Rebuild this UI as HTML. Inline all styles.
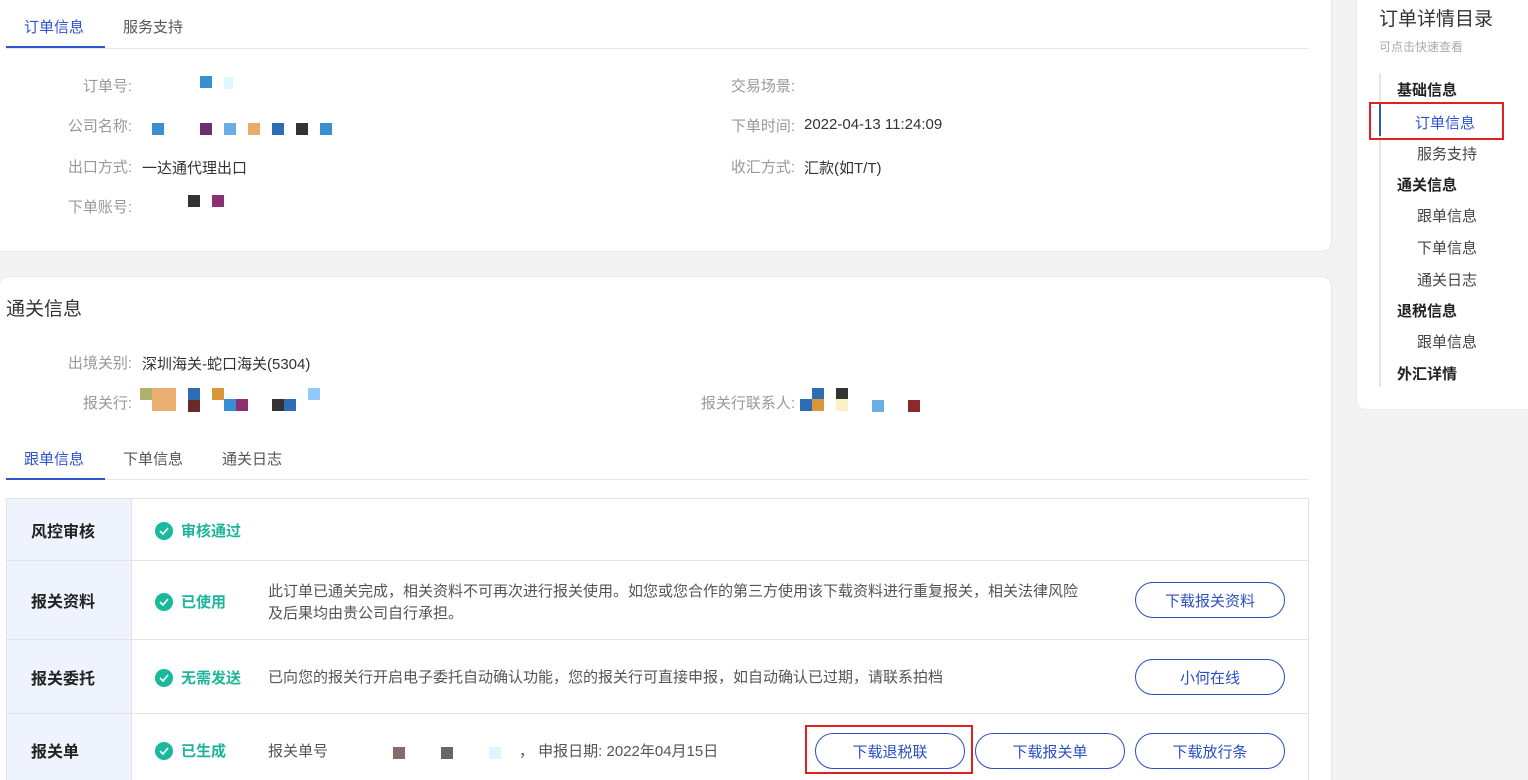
<!DOCTYPE html>
<html style="width:1528px;height:780px;overflow:hidden"><head><meta charset="utf-8"><style>
*{margin:0;padding:0;box-sizing:border-box}
body{width:1528px;height:780px;overflow:hidden;background:#f3f3f4;font-family:"Liberation Sans","Noto Sans CJK SC",sans-serif;font-size:15px;color:#333;position:relative}
.card{position:absolute;left:0;width:1332px;background:#fff;border-radius:0 0 10px 0;border:1px solid #e8e8e8;border-left:none}
.abs{position:absolute;white-space:nowrap}
.lab{color:#999;text-align:right;width:132px;left:0}
.lab2{color:#999;text-align:right;width:795px;left:0}
.tab{position:absolute;font-size:15px;color:#555}
.line{position:absolute;height:1px;background:#e4e6ea}
.ul{position:absolute;height:2px;background:#2b55cc}
.px{position:absolute;width:12px;height:12px}
.tbl{position:absolute;left:6px;top:498px;width:1303px;border:1px solid #e3e3e3;height:290px;overflow:hidden}
.row{position:absolute;left:0;width:1301px;border-top:1px solid #e3e3e3}
.hd{position:absolute;left:0;top:0;bottom:0;width:125px;background:#eff3fd;border-right:1px solid #e3e3e3;font-weight:bold;font-size:16px;color:#222;display:flex;align-items:center;padding-left:24px}
.st{position:absolute;left:148px;display:flex;align-items:center;color:#1bb69a;font-weight:bold;font-size:15px}
.ck{width:18px;height:18px;border-radius:50%;background:#19b99c;margin-right:8px;display:flex;align-items:center;justify-content:center}
.btn{position:absolute;width:150px;height:36px;border:1px solid #2b4fc0;border-radius:18px;color:#2b4fc0;font-size:15px;display:flex;align-items:center;justify-content:center;background:#fff}
.desc{position:absolute;left:261px;color:#555;font-size:15px;line-height:22px}
.side{position:absolute;left:1356px;top:-10px;width:180px;height:420px;background:#fff;border-radius:10px;border:1px solid #ebebeb}
.si{position:absolute;font-size:15px;color:#444;white-space:nowrap}
</style></head><body>

<div class="card" style="top:-10px;height:262px"></div>
<div class="tab" style="left:24px;top:16px;color:#2b55cc">订单信息</div>
<div class="tab" style="left:123px;top:16px">服务支持</div>
<div class="line" style="left:6px;top:48px;width:1302px"></div>
<div class="ul" style="left:6px;top:46px;width:99px"></div>

<div class="abs lab" style="top:75px">订单号:</div>
<div class="px" style="left:200px;top:76px;background:#3a8fd0"></div>
<div class="px" style="left:224px;top:77px;width:9px;background:#ddf8fc"></div>
<div class="abs lab" style="top:115px">公司名称:</div>
<div class="px" style="left:152px;top:123px;background:#3a8fd0"></div>
<div class="px" style="left:200px;top:123px;background:#6b2f70"></div>
<div class="px" style="left:224px;top:123px;background:#6aaee8"></div>
<div class="px" style="left:248px;top:123px;background:#e8ab6a"></div>
<div class="px" style="left:272px;top:123px;background:#2e6cb4"></div>
<div class="px" style="left:296px;top:123px;background:#333"></div>
<div class="px" style="left:320px;top:123px;background:#3a8fd0"></div>
<div class="abs lab" style="top:156px">出口方式:</div>
<div class="abs" style="left:142px;top:157px">一达通代理出口</div>
<div class="abs lab" style="top:196px">下单账号:</div>
<div class="px" style="left:188px;top:195px;background:#333"></div>
<div class="px" style="left:212px;top:195px;background:#8b3070"></div>

<div class="abs lab2" style="top:75px">交易场景:</div>
<div class="abs lab2" style="top:115px">下单时间:</div>
<div class="abs" style="left:804px;top:116px">2022-04-13 11:24:09</div>
<div class="abs lab2" style="top:156px">收汇方式:</div>
<div class="abs" style="left:804px;top:157px">汇款(如T/T)</div>

<div class="card" style="top:276px;height:520px;border-radius:10px 10px 0 0;border-top:1px solid #e8e8e8"></div>
<div class="abs" style="left:6px;top:294px;font-size:19px;color:#333">通关信息</div>
<div class="abs lab" style="top:352px">出境关别:</div>
<div class="abs" style="left:142px;top:353px">深圳海关-蛇口海关(5304)</div>
<div class="abs lab" style="top:392px">报关行:</div>
<div class="px" style="left:140px;top:388px;background:#b0b070"></div>
<div class="px" style="left:152px;top:388px;width:24px;height:23px;background:#eab070"></div>
<div class="px" style="left:188px;top:388px;background:#2e6cb4"></div>
<div class="px" style="left:188px;top:400px;background:#6b2a2a"></div>
<div class="px" style="left:212px;top:388px;background:#d8983a"></div>
<div class="px" style="left:224px;top:399px;background:#3a8fd0"></div>
<div class="px" style="left:236px;top:399px;background:#8b3070"></div>
<div class="px" style="left:272px;top:399px;background:#333"></div>
<div class="px" style="left:284px;top:399px;background:#2e6cb4"></div>
<div class="px" style="left:308px;top:388px;background:#8fcaf8"></div>
<div class="abs lab2" style="top:392px">报关行联系人:</div>
<div class="px" style="left:812px;top:388px;background:#2e6cb4"></div>
<div class="px" style="left:800px;top:399px;background:#2e6cb4"></div>
<div class="px" style="left:812px;top:399px;background:#d8983a"></div>
<div class="px" style="left:836px;top:388px;background:#333"></div>
<div class="px" style="left:836px;top:399px;background:#fbf0c8"></div>
<div class="px" style="left:872px;top:400px;background:#6aaee8"></div>
<div class="px" style="left:908px;top:400px;background:#8b2a2a"></div>

<div class="tab" style="left:24px;top:448px;color:#2b55cc">跟单信息</div>
<div class="tab" style="left:123px;top:448px">下单信息</div>
<div class="tab" style="left:222px;top:448px">通关日志</div>
<div class="line" style="left:6px;top:479px;width:1302px"></div>
<div class="ul" style="left:6px;top:478px;width:99px"></div>

<div class="tbl">
 <div class="row" style="top:-1px;height:62px"><div class="hd">风控审核</div>
  <div class="st" style="top:21px"><div class="ck"><svg width="10" height="8"><path d="M1 4l3 3 5-6" stroke="#fff" stroke-width="1.6" fill="none"/></svg></div>审核通过</div></div>
 <div class="row" style="top:61px;height:79px"><div class="hd">报关资料</div>
  <div class="st" style="top:30px"><div class="ck"><svg width="10" height="8"><path d="M1 4l3 3 5-6" stroke="#fff" stroke-width="1.6" fill="none"/></svg></div>已使用</div>
  <div class="desc" style="top:20px">此订单已通关完成，相关资料不可再次进行报关使用。如您或您合作的第三方使用该下载资料进行重复报关，相关法律风险<br>及后果均由贵公司自行承担。</div>
  <div class="btn" style="left:1128px;top:21px">下载报关资料</div></div>
 <div class="row" style="top:140px;height:74px"><div class="hd">报关委托</div>
  <div class="st" style="top:27px"><div class="ck"><svg width="10" height="8"><path d="M1 4l3 3 5-6" stroke="#fff" stroke-width="1.6" fill="none"/></svg></div>无需发送</div>
  <div class="desc" style="top:27px">已向您的报关行开启电子委托自动确认功能，您的报关行可直接申报，如自动确认已过期，请联系拍档</div>
  <div class="btn" style="left:1128px;top:19px">小何在线</div></div>
 <div class="row" style="top:214px;height:90px"><div class="hd" style="padding-bottom:18px">报关单</div>
  <div class="st" style="top:26px"><div class="ck"><svg width="10" height="8"><path d="M1 4l3 3 5-6" stroke="#fff" stroke-width="1.6" fill="none"/></svg></div>已生成</div>
  <div class="desc" style="top:27px">报关单号</div>
  <div class="px" style="left:386px;top:33px;background:#8a6a68"></div>
  <div class="px" style="left:434px;top:33px;background:#666"></div>
  <div class="px" style="left:482px;top:33px;background:#ddf8fc"></div>
  <div class="desc" style="left:512px;top:27px">，  申报日期:  2022年04月15日</div>
  <div class="btn" style="left:808px;top:19px">下载退税联</div>
  <div class="btn" style="left:968px;top:19px">下载报关单</div>
  <div class="btn" style="left:1128px;top:19px">下载放行条</div></div>
</div>
<div class="abs" style="left:805px;top:725px;width:168px;height:49px;border:2px solid #e02020"></div>

<div class="side"></div>
<div class="si" style="left:1379px;top:4px;font-size:19px;color:#333">订单详情目录</div>
<div class="si" style="left:1379px;top:38px;font-size:12px;color:#aaa">可点击快速查看</div>
<div class="abs" style="left:1379px;top:73px;width:2px;height:314px;background:#e6e6e6"></div>
<div class="abs" style="left:1379px;top:104px;width:2px;height:32px;background:#2b55cc"></div>
<div class="si" style="left:1397px;top:79px;font-weight:bold;color:#222">基础信息</div>
<div class="si" style="left:1415px;top:112px;color:#2b55cc">订单信息</div>
<div class="abs" style="left:1369px;top:102px;width:135px;height:38px;border:2px solid #e02020"></div>
<div class="si" style="left:1417px;top:143px">服务支持</div>
<div class="si" style="left:1397px;top:174px;font-weight:bold;color:#222">通关信息</div>
<div class="si" style="left:1417px;top:205px">跟单信息</div>
<div class="si" style="left:1417px;top:237px">下单信息</div>
<div class="si" style="left:1417px;top:269px">通关日志</div>
<div class="si" style="left:1397px;top:300px;font-weight:bold;color:#222">退税信息</div>
<div class="si" style="left:1417px;top:331px">跟单信息</div>
<div class="si" style="left:1397px;top:363px;font-weight:bold;color:#222">外汇详情</div>
</body></html>
